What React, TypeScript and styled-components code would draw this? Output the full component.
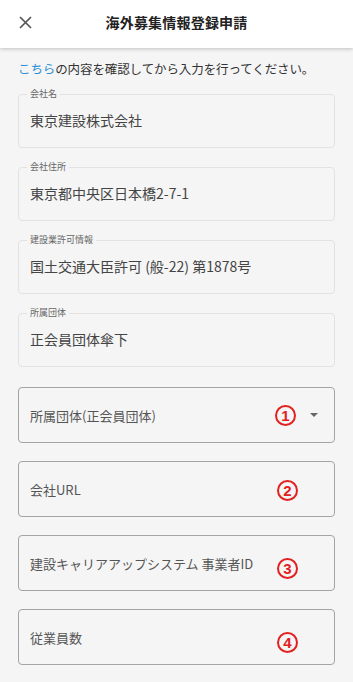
import React from "react";
import styled, { createGlobalStyle } from "styled-components";

const GlobalStyle = createGlobalStyle`
  html, body {
    margin: 0;
    padding: 0;
    background: #f5f5f5;
    font-family: "Noto Sans CJK JP", "Noto Sans", Roboto, sans-serif;
    color: #333;
  }
`

const Page = styled.div`
  width: 353px;
  min-height: 682px;
  background: #f5f5f5;
`

const Header = styled.header`
  height: 48px;
  background: #fff;
  box-shadow: 0 1px 4px rgba(0, 0, 0, 0.22);
  display: flex;
  align-items: center;
  padding: 0 16px;
  box-sizing: border-box;
`

const CloseButton = styled.button`
  border: none;
  background: none;
  padding: 0;
  width: 18px;
  height: 18px;
  display: flex;
  align-items: center;
  justify-content: center;
  color: #555;
  margin-top: -4px;
`

const Title = styled.h1`
  flex: 1;
  margin: -4px 0 0 -18px;
  text-align: center;
  font-size: 14px;
  font-weight: 700;
  color: #222;
  letter-spacing: 0.2px;
`

const Body = styled.main`
  padding: 12px 18px 0;
  display: flex;
  flex-direction: column;
`

const Notice = styled.p`
  margin: 0 0 11px;
  font-size: 12.5px;
  line-height: 18px;
  color: #333;
  white-space: nowrap;
  letter-spacing: -0.1px;
  > a {
    color: #2b8fd8;
    text-decoration: none;
  }
`

const ReadOnlyGroup = styled.div`
  display: flex;
  flex-direction: column;
  gap: 14px;
  margin-bottom: 20px;
`

const ReadOnlyField = styled.fieldset`
  margin: 0;
  padding: 0 8px;
  border: 1px solid #e2e2e2;
  border-radius: 4px;
  height: 59px;
  box-sizing: border-box;
  min-width: 0;
  > legend {
    font-size: 9px;
    line-height: 10px;
    color: #666;
    padding: 0 3px;
  }
`

const Value = styled.div`
  padding: 11px 3px 0;
  font-size: 14px;
  line-height: 20px;
  color: #444;
`

const InputBox = styled.div`
  height: 56px;
  border: 1px solid #a4a4a4;
  border-radius: 4px;
  box-sizing: border-box;
  margin-bottom: 18px;
  padding: 0 16px 0 11px;
  display: flex;
  align-items: center;
`

const Placeholder = styled.span`
  flex: 1;
  min-width: 0;
  font-size: 13px;
  color: #555;
  white-space: nowrap;
`

const Marker = styled.span<{ $shift: number; $gap: number }>`
  flex-shrink: 0;
  width: 21px;
  height: 21px;
  border: 2px solid #e32020;
  border-radius: 50%;
  box-sizing: border-box;
  color: #e32020;
  font-family: "Liberation Sans", Arial, sans-serif;
  font-weight: 700;
  font-size: 15px;
  line-height: 17px;
  text-align: center;
  margin-top: ${p => p.$shift}px;
  margin-right: ${p => p.$gap}px;
`

const Caret = styled.span`
  flex-shrink: 0;
  width: 0;
  height: 0;
  border-left: 4px solid transparent;
  border-right: 4px solid transparent;
  border-top: 4px solid #666;
`

const readOnly = [
  { label: "会社名", value: "東京建設株式会社" },
  { label: "会社住所", value: "東京都中央区日本橋2-7-1" },
  { label: "建設業許可情報", value: "国土交通大臣許可 (般-22) 第1878号" },
  { label: "所属団体", value: "正会員団体傘下" },
]

const inputs = [
  { label: "所属団体(正会員団体)", mark: "1", select: true, shift: 0 },
  { label: "会社URL", mark: "2", shift: 2 },
  { label: "建設キャリアアップシステム 事業者ID", mark: "3", shift: 11 },
  { label: "従業員数", mark: "4", shift: 10 },
]

function App() {
  return (
    <Page>
      <GlobalStyle />
      <Header>
        <CloseButton aria-label="閉じる">
          <svg width="13" height="13" viewBox="0 0 13 13">
            <path d="M1 1L12 12M12 1L1 12" stroke="currentColor" strokeWidth="1.7" />
          </svg>
        </CloseButton>
        <Title>海外募集情報登録申請</Title>
      </Header>
      <Body>
        <Notice>
          <a href="#">こちら</a>の内容を確認してから入力を行ってください。
        </Notice>
        <ReadOnlyGroup>
          {readOnly.map(f =>
            <ReadOnlyField key={f.label}>
              <legend>{f.label}</legend>
              <Value>{f.value}</Value>
            </ReadOnlyField>)}
        </ReadOnlyGroup>
        {inputs.map(f =>
          <InputBox key={f.label}>
            <Placeholder>{f.label}</Placeholder>
            <Marker $shift={f.shift} $gap={f.select ? 14 : 20}>{f.mark}</Marker>
            {f.select && <Caret />}
          </InputBox>)}
      </Body>
    </Page>
  );
}

export default App
